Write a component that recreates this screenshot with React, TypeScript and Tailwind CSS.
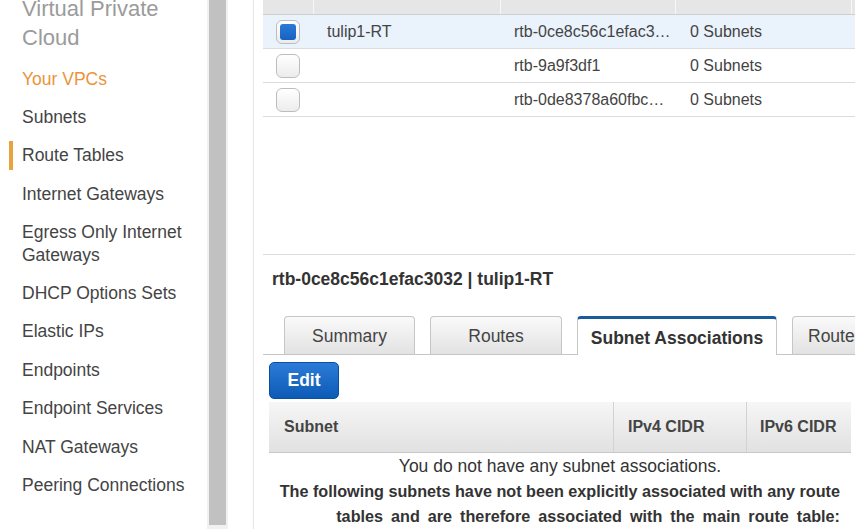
import { ReactNode } from 'react'

const NAV = [
  'Subnets',
  'Route Tables',
  'Internet Gateways',
  'Egress Only Internet Gateways',
  'DHCP Options Sets',
  'Elastic IPs',
  'Endpoints',
  'Endpoint Services',
  'NAT Gateways',
  'Peering Connections',
]

const ROWS = [
  { name: 'tulip1-RT', id: 'rtb-0ce8c56c1efac3032', subnets: '0 Subnets', selected: true },
  { name: '', id: 'rtb-9a9f3df1', subnets: '0 Subnets', selected: false },
  { name: '', id: 'rtb-0de8378a60fbc4d21', subnets: '0 Subnets', selected: false },
]

function Checkbox({ checked }: { checked: boolean }) {
  return (
    <div className="w-[24px] h-[24px] rounded-[6px] border border-[#bdbdbd] bg-gradient-to-b from-white to-[#ececec] flex items-center justify-center">
      {checked && <div className="w-[16px] h-[16px] rounded-[3px] bg-gradient-to-b from-[#2a7bd6] to-[#1563c0]" />}
    </div>
  )
}

function Tab({ children, active, w }: { children: ReactNode; active?: boolean; w: string }) {
  if (active) {
    return (
      <div className={`${w} h-[39px] -mb-px shrink-0 whitespace-nowrap border border-[#c6c6c6] border-t-[3px] border-t-[#1b5b9c] border-b-0 bg-white rounded-t-[4px] flex items-center justify-center font-bold text-[#333] pt-[3px]`}>
        {children}
      </div>
    )
  }
  return (
    <div className={`${w} h-[38px] shrink-0 whitespace-nowrap border border-[#c6c6c6] border-b-0 rounded-t-[4px] bg-gradient-to-b from-[#fafafa] to-[#e2e2e2] flex items-center justify-center text-[#444] pt-[2px]`}>
      {children}
    </div>
  )
}

export default function App() {
  return (
    <div className="w-[855px] h-[529px] overflow-hidden bg-white flex font-['Liberation_Sans',Arial,sans-serif]">
      {/* Sidebar */}
      <div className="w-[207px] shrink-0 relative">
        <div className="pl-[22px] mt-[-6.5px] text-[22px] leading-[29px] text-[#9b9b9b]">
          Virtual Private
          <br />
          Cloud
        </div>
        <div className="mt-[8px] text-[17.5px] leading-[22.4px] text-[#444]">
          <div className="pl-[22px] py-[8px] text-[#e9943a]">Your VPCs</div>
          {NAV.map((item) => (
            <div key={item} className="relative pl-[22px] pr-[10px] py-[8px]">
              {item === 'Route Tables' && (
                <span className="absolute left-[9px] top-[4.5px] w-[4px] h-[29px] bg-[#e8a23e]" />
              )}
              {item}
            </div>
          ))}
        </div>
      </div>

      {/* Scrollbar */}
      <div className="w-[21px] shrink-0 bg-[#f1f1f1] px-[2px] pb-[4px]">
        <div className="h-full bg-[#c1c1c1]" />
      </div>

      <div className="w-[25px] shrink-0" />

      {/* Main */}
      <div className="flex-1 border-l border-[#e6e6e6] pl-[9px] text-[#444] min-w-0 overflow-hidden">
        {/* Top table pane */}
        <div className="h-[255px] border-b border-[#dcdcdc] w-[640px]">
          <div className="h-[15px] bg-[#e6e6e6] border-b border-[#cfcfcf] flex">
            <div className="w-[50px]" />
            <div className="w-[187px] border-l border-[#f7f7f7]" />
            <div className="w-[175px] border-l border-[#f7f7f7]" />
            <div className="w-[176px] border-l border-[#f7f7f7]" />
            <div className="flex-1 border-l border-[#f7f7f7]" />
          </div>
          {ROWS.map((r) => (
            <div
              key={r.id}
              className={`h-[34px] border-b border-[#dcdcdc] flex items-center text-[16px] ${r.selected ? 'bg-[#eaf2fc]' : 'bg-white'}`}
            >
              <div className="w-[50px] flex justify-center">
                <Checkbox checked={r.selected} />
              </div>
              <div className="w-[187px] pl-[14px]">{r.name}</div>
              <div className="w-[175px] pl-[14px] pr-[4px] truncate">{r.id}</div>
              <div className="w-[176px] pl-[15px]">{r.subnets}</div>
            </div>
          ))}
        </div>

        {/* Detail pane */}
        <div className="pt-[12px]">
          <div className="pl-[9px] text-[17.5px] leading-[24px] font-bold text-[#333]">
            rtb-0ce8c56c1efac3032 | tulip1-RT
          </div>
          <div className="mt-[25px] flex items-end gap-[15px] pl-[21px] border-b border-[#c6c6c6] text-[17.5px] w-[700px]">
            <Tab w="w-[131px]">Summary</Tab>
            <Tab w="w-[132px]">Routes</Tab>
            <Tab w="w-[200px]" active>Subnet Associations</Tab>
            <Tab w="px-[15px]">Route Propagation</Tab>
          </div>

          <div className="pl-[6px] pt-[7px]">
            <button className="w-[70px] h-[37px] rounded-[5px] border border-[#0a4f9e] bg-gradient-to-b from-[#2a7bd8] to-[#0c5bb5] text-white font-bold text-[17.5px]">
              Edit
            </button>
            <div className="mt-[3px] w-[582px] h-[51px] flex border-b border-[#c8c8c8] bg-gradient-to-b from-[#f6f6f6] to-[#e1e1e1] text-[16px] font-bold text-[#444]">
              <div className="w-[344px] pl-[15px] flex items-center">Subnet</div>
              <div className="w-[133px] pl-[14px] flex items-center border-l border-[#d2d2d2]">IPv4 CIDR</div>
              <div className="flex-1 pl-[13px] flex items-center border-l border-[#d2d2d2]">IPv6 CIDR</div>
            </div>
            <div className="w-[582px] text-center text-[17.5px] leading-[26px] text-[#333]">
              You do not have any subnet associations.
            </div>
            <div className="w-[582px] pr-[11px] text-right text-[16.2px] leading-[25px] font-bold text-[#333]">
              The following subnets have not been explicitly associated with any route
              <br />
              <span className="[word-spacing:3.5px]">tables and are therefore associated with the main route table:</span>
            </div>
          </div>
        </div>
      </div>
    </div>
  )
}
